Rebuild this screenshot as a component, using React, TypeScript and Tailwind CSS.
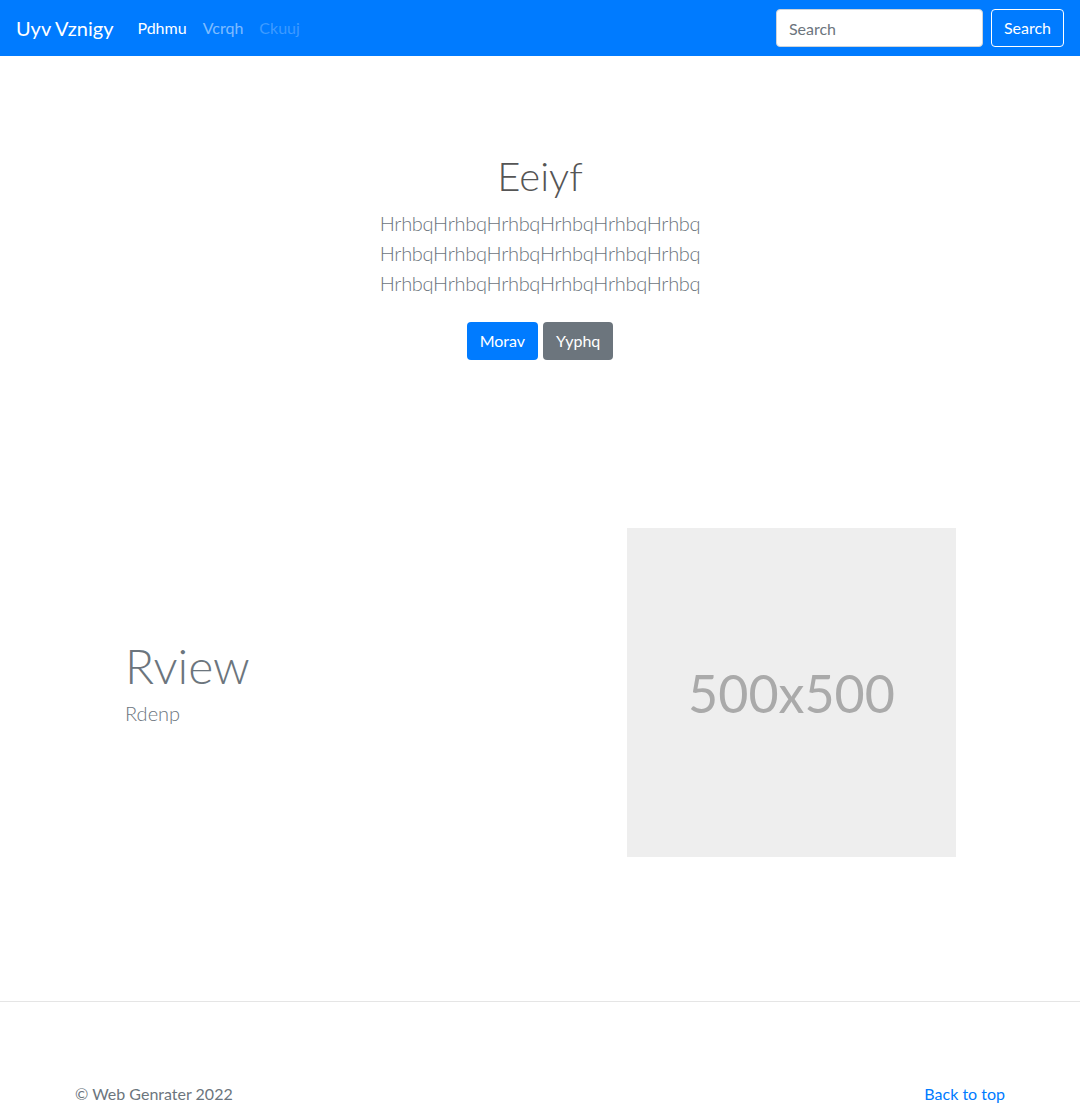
import React from 'react';

const font = { fontFamily: 'Lato, "Open Sans", sans-serif' };

function Navbar() {
  return (
    <nav className="flex h-14 items-center justify-between bg-[#007bff] px-4">
      <div className="flex items-center">
        <a href="#" className="mr-6 text-[20px] leading-[30px] text-white">
          Uyv Vznigy
        </a>
        <ul className="flex items-center text-[16px]">
          <li className="pr-2">
            <a href="#" className="text-white">Pdhmu</a>
          </li>
          <li className="px-2">
            <a href="#" className="text-white/50">Vcrqh</a>
          </li>
          <li className="px-2">
            <a href="#" className="text-white/25">Ckuuj</a>
          </li>
        </ul>
      </div>
      <form className="flex items-center">
        <input
          type="text"
          placeholder="Search"
          className="mr-2 h-[38px] w-[207px] rounded border border-[#ced4da] bg-white px-3 text-[16px] text-[#495057] placeholder:text-[#6c757d] outline-none"
        />
        <button
          type="button"
          className="h-[38px] rounded border border-white px-3 text-[16px] text-white"
        >
          Search
        </button>
      </form>
    </nav>
  );
}

function Hero() {
  return (
    <section className="pb-[72px] pt-[96px] text-center">
      <h1 className="mb-2 text-[40px] font-light leading-[48px] text-[#555]">Eeiyf</h1>
      <p className="mb-4 text-[20px] font-light leading-[30px] tracking-[-0.3px] text-[#6c757d]">
        HrhbqHrhbqHrhbqHrhbqHrhbqHrhbq
        <br />
        HrhbqHrhbqHrhbqHrhbqHrhbqHrhbq
        <br />
        HrhbqHrhbqHrhbqHrhbqHrhbqHrhbq
      </p>
      <p className="flex justify-center gap-[5px] pt-[8px]">
        <a href="#" className="flex h-[38px] items-center rounded bg-[#007bff] px-[13px] text-[16px] text-white">
          Morav
        </a>
        <a href="#" className="flex h-[38px] items-center rounded bg-[#6c757d] px-[13px] text-[16px] text-white">
          Yyphq
        </a>
      </p>
    </section>
  );
}

function Featurette() {
  return (
    <section className="mx-auto w-[930px] pl-[50px] pr-[49px] pt-[96px]">
      <div className="flex items-center justify-between">
        <div className="mb-5">
          <h2 className="text-[48px] font-light leading-[57px] text-[#6c757d]">Rview</h2>
          <p className="mt-1 text-[20px] font-light leading-[30px] text-[#6c757d]">Rdenp</p>
        </div>
        <div className="flex h-[329px] w-[329px] items-center justify-center bg-[#eeeeee]">
          <span className="text-[52px] text-[#aaaaaa]">500x500</span>
        </div>
      </div>
    </section>
  );
}

function Footer() {
  return (
    <footer className="mt-[144px] border-t border-[#e5e5e5] pt-[80px]">
      <div className="mx-auto flex w-[930px] justify-between pb-12 text-[16px] leading-[24px]">
        <p className="text-[#6c757d]">© Web Genrater 2022</p>
        <a href="#" className="text-[#007bff]">Back to top</a>
      </div>
    </footer>
  );
}

export default function App() {
  return (
    <div className="min-h-screen bg-white" style={font}>
      <Navbar />
      <Hero />
      <Featurette />
      <Footer />
    </div>
  );
}
